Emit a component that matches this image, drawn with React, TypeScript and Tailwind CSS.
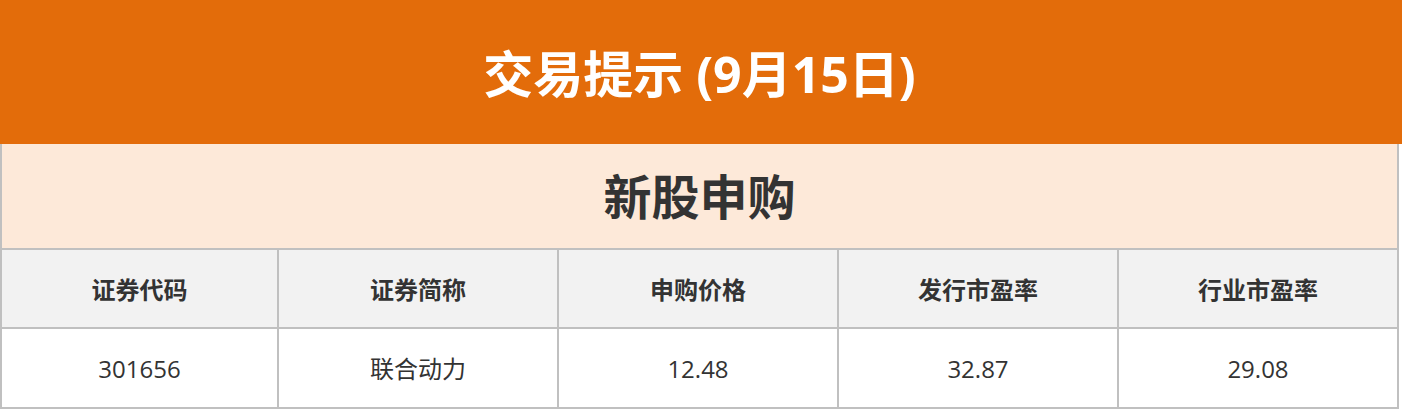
import React from "react";

const font = { fontFamily: '"Open Sans", "Noto Sans CJK SC", sans-serif' };

export default function App() {
  const headers = ["证券代码", "证券简称", "申购价格", "发行市盈率", "行业市盈率"];
  const values = ["301656", "联合动力", "12.48", "32.87", "29.08"];
  return (
    <div className="w-full bg-white font-['Open_Sans','Noto_Sans_CJK_SC',sans-serif]" style={font}>
      <div className="w-full bg-[#e36c0a]">
        <div className="w-[1399px] h-[144px] flex items-center justify-center text-white font-bold text-[50px] leading-none pt-[4px]">
          交易提示 (9月15日)
        </div>
      </div>
      <div className="w-[1399px] grid grid-cols-[275px_278px_278px_278px_278px] gap-[2px] px-[2px] pb-[2px] bg-[#c0c0c0]">
        <div className="col-span-5 h-[104px] bg-[#fde9d9] flex items-center justify-center text-[#333333] font-bold text-[48px] leading-none pt-[2px]">
          新股申购
        </div>
        {headers.map((h) => (
          <div key={h} className="h-[77px] bg-[#f2f2f2] flex items-center justify-center text-[#333333] font-bold text-[24px] leading-none pt-[2px]">
            {h}
          </div>
        ))}
        {values.map((v) => (
          <div key={v} className="h-[78px] bg-white flex items-center justify-center text-[#333333] text-[24px] leading-none pt-[2px]">
            {v}
          </div>
        ))}
      </div>
    </div>
  );
}
